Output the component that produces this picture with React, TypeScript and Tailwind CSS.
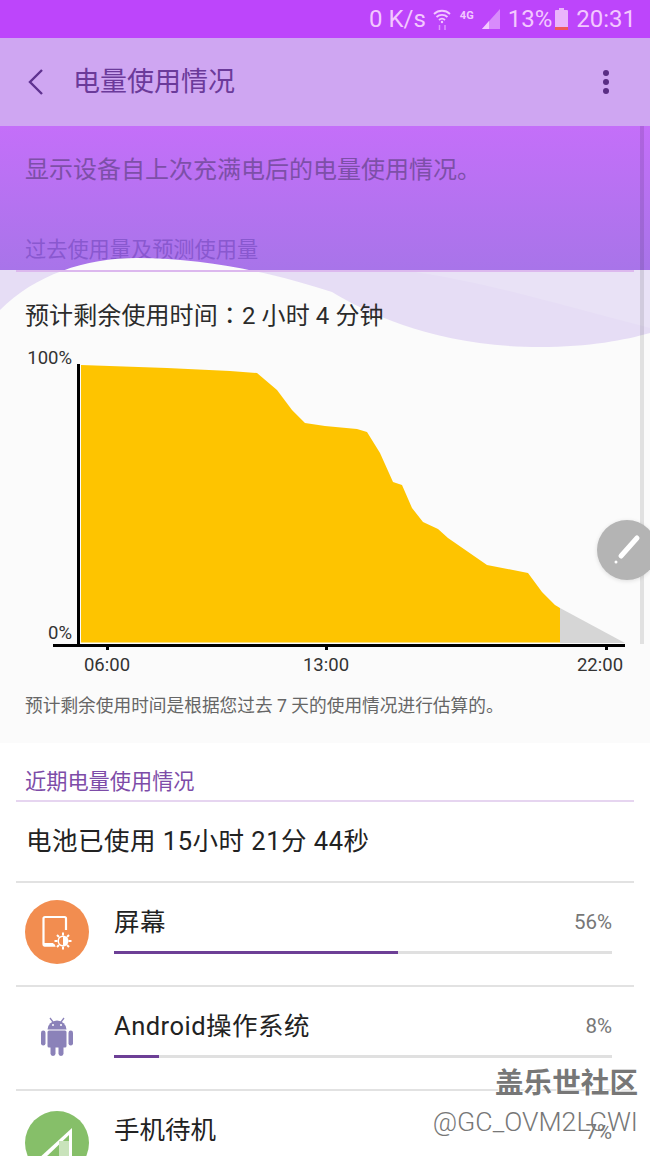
const font = "font-['Roboto','Noto_Sans_CJK_SC',sans-serif]"

const usage = [
  { name: '屏幕', pct: '56%', fill: 'w-[284px]', icon: <ScreenIcon /> },
  { name: 'Android操作系统', pct: '8%', fill: 'w-[45px]', icon: <AndroidIcon /> },
]

function ScreenIcon() {
  return (
    <svg width="64" height="64" viewBox="0 0 64 64">
      <circle cx="32" cy="32" r="32" fill="#f28d50" />
      <path d="M41 30V18.500a1.500 1.500 0 0 0-1.500-1.500H20a1.500 1.500 0 0 0-1.500 1.500V44a1.500 1.500 0 0 0 1.500 1.500h10" fill="none" stroke="#fff" strokeWidth="2.200" />
      <path d="M19 43h9l3 3.500H20a1.500 1.500 0 0 1-1.500-1.500z" fill="#fff" />
      <circle cx="38" cy="41" r="5.500" fill="#fff" />
      <path d="M38 37a4 4 0 0 0 0 8z" fill="#f28d50" />
      <path d="M38 32.500v3M38 46.500v3M29.500 41h3M43.500 41h3M32 35l2 2M44 35l-2 2M32 47l2-2M44 47l-2-2" stroke="#fff" strokeWidth="2" />
    </svg>
  )
}

function AndroidIcon() {
  return (
    <svg width="64" height="64" viewBox="0 0 64 64" fill="#8b82b9">
      <path d="M22.500 25.500a9.500 9 0 0 1 19 0z" />
      <path d="M25 14l3 4M39 14l-3 4" stroke="#8b82b9" strokeWidth="1.300" />
      <rect x="22.500" y="26.500" width="19" height="17" rx="1.500" />
      <rect x="16" y="26.500" width="4.500" height="15" rx="2.200" />
      <rect x="43.500" y="26.500" width="4.500" height="15" rx="2.200" />
      <rect x="25.500" y="41" width="5" height="11" rx="2.400" />
      <rect x="33.500" y="41" width="5" height="11" rx="2.400" />
      <circle cx="28" cy="21" r="1" fill="#fff" />
      <circle cx="36" cy="21" r="1" fill="#fff" />
    </svg>
  )
}

function StatusBar() {
  return (
    <div className="h-[38px] bg-[#bd45fb] flex items-center justify-end pr-[14px] text-[#f3c8ff] text-[24px] leading-none">
      <span className="mr-[7px]">0 K/s</span>
      <svg width="18" height="24" viewBox="0 0 18 24" fill="none" stroke="#f3c8ff" className="mr-[9px]">
        <path d="M1 7a11.500 11.500 0 0 1 16 0" strokeWidth="1.800" />
        <path d="M3.500 10a8 8 0 0 1 11 0" strokeWidth="1.800" />
        <path d="M6 13a4.500 4.500 0 0 1 6 0" strokeWidth="1.800" />
        <circle cx="9" cy="15" r="1.200" fill="#f3c8ff" stroke="none" />
        <path d="M6.500 23v-5M12 23v-5" strokeWidth="1.500" opacity="0.600" />
      </svg>
      <span className="text-[11px] font-bold mr-[8px] mb-[8px]">4G</span>
      <svg width="18" height="20" viewBox="0 0 18 20" className="mr-[8px]">
        <path d="M0 20L18 0v20z" fill="#d88bfb" />
        <path d="M0 20l7-8v8z" fill="#f3c8ff" />
      </svg>
      <span>13%</span>
      <svg width="13" height="22" viewBox="0 0 13 22" className="ml-[3px] mr-[8px]">
        <path d="M4 0h5v2h3a1 1 0 0 1 1 1v18a1 1 0 0 1-1 1H1a1 1 0 0 1-1-1V3a1 1 0 0 1 1-1h3z" fill="#eab4fb" />
        <rect y="19" width="13" height="3" fill="#ee5a5a" />
      </svg>
      <span>20:31</span>
    </div>
  )
}

function Toolbar() {
  return (
    <div className="h-[88px] bg-[#cfa6f2] flex items-center">
      <svg width="18" height="28" viewBox="0 0 18 28" fill="none" stroke="#5f3290" strokeWidth="2.400" className="ml-[27px] mr-[28px]">
        <path d="M15 2L3 14l12 12" />
      </svg>
      <span className="text-[27px] text-[#6b3a9a]">电量使用情况</span>
      <div className="ml-auto mr-[41px] flex flex-col gap-[3px]">
        <span className="w-[6px] h-[6px] rounded-full bg-[#5a2d84]" />
        <span className="w-[6px] h-[6px] rounded-full bg-[#5a2d84]" />
        <span className="w-[6px] h-[6px] rounded-full bg-[#5a2d84]" />
      </div>
    </div>
  )
}

function Wave() {
  return (
    <svg width="650" height="110" viewBox="0 0 650 110" className="absolute left-0 top-[250px]">
      <rect y="20" width="650" height="90" fill="#e6ddf5" />
      <path d="M267 20H650V78C560 55 480 30 400 20z" fill="#e9e2f6" />
      <path d="M0 60C35 25 85 8 137 8C210 8 280 25 332 42C370 65 440 97 540 97C590 97 625 90 650 83V110H0z" fill="#fbfbfb" />
    </svg>
  )
}

function Chart() {
  return (
    <svg width="650" height="340" viewBox="0 -10 650 340" className="relative block mt-[6px]">
      <path d="M81 15L167 18L230 21L257 23L277 40L292 60L305 73L325 76L357 79L367 82L380 103L393 132L402 135L412 158L423 172L438 179L448 188L487 215L528 223L542 242L555 255L560 258V292.500H81z" fill="#fec400" />
      <path d="M560 258L625 293H560z" fill="#d6d6d6" />
      <rect x="77" y="14" width="3" height="283" fill="#000" />
      <rect x="53" y="294" width="572" height="3" fill="#000" />
      <rect x="106" y="296" width="3" height="4" fill="#000" />
      <rect x="325" y="296" width="3" height="4" fill="#000" />
      <rect x="605" y="296" width="3" height="4" fill="#000" />
      <g fontSize="18.500" fill="#333">
        <text x="72" y="14" textAnchor="end">100%</text>
        <text x="72" y="289" textAnchor="end">0%</text>
        <text x="107" y="321" textAnchor="middle">06:00</text>
        <text x="326" y="321" textAnchor="middle">13:00</text>
        <text x="600" y="321" textAnchor="middle">22:00</text>
      </g>
    </svg>
  )
}

function UsageRow({ name, pct, fill, icon }: { name: string; pct: string; fill: string; icon: React.ReactNode }) {
  return (
    <div className="h-[104px] border-t-2 border-[#e2e2e2] mx-[16px] flex">
      <div className="ml-[9px] mt-[17px] w-[64px] h-[64px] shrink-0">{icon}</div>
      <div className="ml-[25px] w-[498px] pt-[19px]">
        <div className="flex items-center justify-between h-[40px]">
          <span className="text-[25.500px] tracking-[0.500px] text-[#222]">{name}</span>
          <span className="text-[20.500px] text-[#777]">{pct}</span>
        </div>
        <div className="mt-[9px] h-[3px] bg-[#e0e0e0]">
          <div className={`h-full bg-[#6d3f96] ${fill}`} />
        </div>
      </div>
    </div>
  )
}

export default function App() {
  return (
    <div className={`relative w-[650px] h-[1156px] overflow-hidden bg-white ${font}`}>
      <StatusBar />
      <Toolbar />

      <div className="h-[144px] bg-gradient-to-b from-[#c46ff9] to-[#a874e9] px-[25px]">
        <p className="pt-[26px] text-[24px] leading-[36px] text-[#7d4fa8]">显示设备自上次充满电后的电量使用情况。</p>
        <p className="mt-[48px] text-[21.200px] leading-[28px] text-[#8958cf]">过去使用量及预测使用量</p>
      </div>

      <div className="h-[473px] bg-[#fbfbfb]">
        <Wave />
        <div className="relative h-[2px] mx-[16px] bg-[#dcb8ee]" />
        <p className="relative mt-[24px] pl-[25px] text-[24px] tracking-[0.100px] leading-[36px] text-[#2b2b2b]">
          预计剩余使用时间<span className="font-['Noto_Sans_CJK_TC',sans-serif]">：</span>2 小时 4 分钟
        </p>
        <Chart />
        <p className="relative pl-[25px] mt-[14px] text-[17.700px] leading-[24px] text-[#666]">预计剩余使用时间是根据您过去 7 天的使用情况进行估算的。</p>
      </div>

      <p className="pt-[24px] pl-[25px] text-[21.200px] leading-[30px] text-[#7d4ca8]">近期电量使用情况</p>
      <div className="mt-[3px] mx-[16px] h-[2px] bg-[#e6d5f0]" />
      <p className="pl-[26px] h-[79px] flex items-center text-[25.500px] tracking-[0.500px] text-[#222]">电池已使用 15小时 21分 44秒</p>

      {usage.map((u) => (
        <UsageRow key={u.name} {...u} />
      ))}
      <div className="border-t-2 border-[#e2e2e2] mx-[16px] flex">
        <svg width="64" height="64" viewBox="0 0 64 64" className="ml-[9px] mt-[20px] shrink-0">
          <circle cx="32" cy="32" r="32" fill="#86bf69" />
          <path d="M13 48L47 17V48z" fill="#fff" />
          <path d="M19 48L44 24V48z" fill="#86bf69" />
          <rect x="34" y="30" width="10" height="18" fill="#c9e3bb" />
        </svg>
        <div className="ml-[25px] pt-[20px] flex items-center h-[59px] text-[25.500px] text-[#222]">手机待机</div>
      </div>

      {/* scroll indicator */}
      <div className="absolute left-[640px] top-[126px] w-[4px] h-[518px] bg-black/10" />

      {/* floating pen button */}
      <div className="absolute left-[597px] top-[520px] w-[60px] h-[60px] rounded-full bg-[#b4b4b4] shadow-[0_1px_4px_rgba(0,0,0,0.12)] flex items-center justify-center">
        <svg width="40" height="40" viewBox="0 0 40 40" fill="none" stroke="#fff">
          <path d="M14 26L30 8" strokeWidth="5" strokeLinecap="round" />
          <circle cx="9" cy="32" r="1.500" fill="#fff" stroke="none" />
        </svg>
      </div>

      {/* watermark */}
      <div className="absolute right-[12px] top-[1065px] text-[28.600px] leading-[36px] font-bold text-[#777] [text-shadow:1px_1px_0_#fff,-1px_-1px_0_#fff]">盖乐世社区</div>
      <div className="absolute right-[12px] top-[1106px] text-[26.700px] leading-[32px] font-light text-[#777] [text-shadow:1px_1px_0_#fff,-1px_-1px_0_#fff]">@GC_OVM2LCWI</div>
      <div className="absolute right-[38px] top-[1119px] text-[20.500px] leading-[26px] text-[#777]">7%</div>
    </div>
  )
}
